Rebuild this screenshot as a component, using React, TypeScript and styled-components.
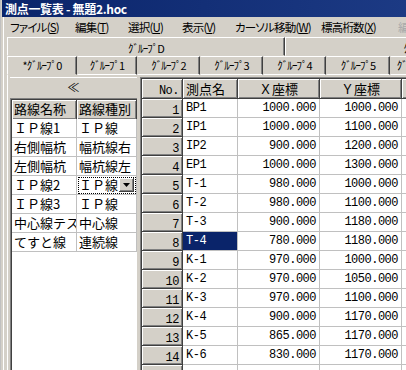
import React from 'react'
import styled, { createGlobalStyle } from 'styled-components'

const UI = `"Noto Sans CJK JP", "Noto Sans", sans-serif`
const MONO = `"Liberation Mono", "Noto Sans CJK JP", monospace`

const GlobalStyle = createGlobalStyle`
  html, body {
    margin: 0;
    padding: 0;
    background: #d4d0c8;
    overflow: hidden;
  }
`

const Window = styled.div`
  width: 406px;
  height: 370px;
  box-sizing: border-box;
  padding-left: 4px;
  background: linear-gradient(to right, #c0c0c0 0 1px, #d4d0c8 1px 3px, #ffffff 3px 4px, #d4d0c8 4px);
  display: flex;
  flex-direction: column;
  overflow: hidden;
  font-family: ${UI};
  color: #000;
`

const TitleBar = styled.div`
  height: 17px;
  margin-left: -2px;
  padding-left: 3px;
  background: linear-gradient(to right, #0a246a, #1c3a84);
  color: #fff;
  font-size: 12px;
  font-weight: 700;
  letter-spacing: -0.3px;
  line-height: 17px;
  white-space: nowrap;
`

const MenuBar = styled.div`
  height: 20px;
  display: flex;
  align-items: center;
  padding-left: 6px;
  font-size: 11.5px;
  font-feature-settings: 'palt';
  letter-spacing: -0.8px;
  white-space: nowrap;
`

const MenuItem = styled.span<{ $w: number; $disabled?: boolean }>`
  width: ${p => p.$w}px;
  flex-shrink: 0;
  color: ${p => (p.$disabled ? '#a8a8a8' : '#000')};
`

const Accel = styled.span`
  text-decoration: underline;
`

const TabControl = styled.div`
  flex: 1;
  margin-left: 3px;
  display: flex;
  flex-direction: column;
  min-height: 0;
`

const TabRow = styled.div`
  display: flex;
  height: 19px;
  flex-shrink: 0;
`

const Tab = styled.div<{ $w: number; $selected?: boolean; $back?: boolean }>`
  width: ${p => p.$w}px;
  flex-shrink: 0;
  box-sizing: border-box;
  border-top: 1px solid #fff;
  border-left: 1px solid ${p => (p.$selected ? '#fff' : '#d4d0c8')};
  border-right: 1px solid #404040;
  border-bottom: 1px solid ${p => (p.$selected ? '#d4d0c8' : '#fff')};
  box-shadow: inset -1px 0 #808080;
  padding-top: ${p => (p.$back ? 3 : 0)}px;
  font-size: 11px;
  letter-spacing: -0.9px;
  line-height: ${p => (p.$back ? 15 : 17)}px;
  text-align: center;
  white-space: nowrap;
  overflow: hidden;
`

const Page = styled.div`
  flex: 1;
  min-height: 0;
  display: flex;
  border-left: 1px solid #fff;
  padding: 2px 0 0 2px;
`

const LeftPane = styled.div`
  width: 127px;
  flex-shrink: 0;
  display: flex;
  flex-direction: column;
`

const CollapseBar = styled.div`
  height: 21px;
  flex-shrink: 0;
  box-sizing: border-box;
  border-top: 1px solid #fff;
  text-align: center;
  font-size: 12px;
  line-height: 17px;
`

const RouteList = styled.div`
  flex: 1;
  background: #fff;
  border-left: 1px solid #808080;
  border-top: 1px solid #808080;
  box-shadow: inset 1px 1px #404040;
  padding: 1px 0 0 1px;
  display: grid;
  grid-template-columns: 65px 60px;
  grid-auto-rows: 19px;
  align-content: start;
  font-size: 13px;
`

const RouteHead = styled.div`
  box-sizing: border-box;
  background: #d4d0c8;
  box-shadow: inset 1px 1px #fff, inset -1px -1px #808080;
  border-right: 1px solid #404040;
  padding-left: 2px;
  line-height: 18px;
  white-space: nowrap;
  overflow: hidden;
`

const RouteCell = styled.div`
  box-sizing: border-box;
  border-right: 1px solid #c0c0c0;
  border-bottom: 1px solid #c0c0c0;
  padding-left: 2px;
  line-height: 18px;
  white-space: nowrap;
  overflow: hidden;
`

const ComboCell = styled(RouteCell)`
  display: flex;
  align-items: center;
  outline: 1px dotted #000;
  outline-offset: -2px;
  padding-right: 2px;
`

const ComboText = styled.span`
  flex: 1;
  overflow: hidden;
`

const ComboButton = styled.div`
  width: 15px;
  height: 14px;
  box-sizing: border-box;
  background: #d4d0c8;
  border-right: 1px solid #404040;
  border-bottom: 1px solid #404040;
  box-shadow: inset 1px 1px #fff, inset -1px -1px #808080;
  display: flex;
  align-items: center;
  justify-content: center;
`

const Splitter = styled.div`
  width: 3px;
  flex-shrink: 0;
`

const Grid = styled.div`
  flex: 1;
  min-width: 0;
  overflow: hidden;
  border-left: 1px solid #808080;
  border-top: 1px solid #808080;
  box-shadow: inset 1px 1px #404040;
  padding: 1px 0 0 1px;
  background: #fff;
  display: grid;
  grid-template-columns: 41px 55px 82px 82px 80px;
  grid-template-rows: 20px;
  grid-auto-rows: 19px;
  align-content: start;
  font-size: 13px;
`

const HeadCell = styled.div<{ $align: 'left' | 'right' | 'center' }>`
  box-sizing: border-box;
  background: #d4d0c8;
  box-shadow: inset 1px 1px #fff, inset -1px -1px #808080;
  border-right: 1px solid #404040;
  border-bottom: 1px solid #404040;
  text-align: ${p => p.$align};
  padding: 0 3px;
  line-height: 19px;
  white-space: nowrap;
  overflow: hidden;
`

const Mono = styled.span`
  font-family: ${MONO};
  font-size: 12px;
  letter-spacing: -0.5px;
`

const Cell = styled.div<{ $align: 'left' | 'right'; $selected?: boolean }>`
  box-sizing: border-box;
  border-right: 1px solid #c0c0c0;
  border-bottom: 1px solid #c0c0c0;
  background: ${p => (p.$selected ? '#0a246a' : '#fff')};
  color: ${p => (p.$selected ? '#fff' : '#000')};
  text-align: ${p => p.$align};
  padding: 0 3px;
  font-family: ${MONO};
  font-size: 12px;
  letter-spacing: -0.5px;
  line-height: 18px;
  white-space: nowrap;
  overflow: hidden;
`

const menus: [string, string, number][] = [
  ['ファイル', 'S', 65],
  ['編集', 'T', 53],
  ['選択', 'U', 54],
  ['表示', 'V', 53],
  ['カーソル移動', 'W', 86],
  ['標高桁数', 'X', 77],
]

const lowerTabs: [string, number][] = [
  ['*ｸﾞﾙｰﾌﾟ0', 70],
  ['ｸﾞﾙｰﾌﾟ1', 60],
  ['ｸﾞﾙｰﾌﾟ2', 63],
  ['ｸﾞﾙｰﾌﾟ3', 63],
  ['ｸﾞﾙｰﾌﾟ4', 63],
  ['ｸﾞﾙｰﾌﾟ5', 64],
  ['ｸﾞﾙｰﾌﾟ6', 48],
]

const routes = [
  ['ＩＰ線1', 'ＩＰ線'],
  ['右側幅杭', '幅杭線右'],
  ['左側幅杭', '幅杭線左'],
  ['ＩＰ線2', 'ＩＰ線'],
  ['ＩＰ線3', 'ＩＰ線'],
  ['中心線テスト', '中心線'],
  ['てすと線', '連続線'],
]

const points = [
  ['BP1', '1000.000', '1000.000'],
  ['IP1', '1000.000', '1100.000'],
  ['IP2', '900.000', '1200.000'],
  ['EP1', '1000.000', '1300.000'],
  ['T-1', '980.000', '1000.000'],
  ['T-2', '980.000', '1100.000'],
  ['T-3', '900.000', '1180.000'],
  ['T-4', '780.000', '1180.000'],
  ['K-1', '970.000', '1000.000'],
  ['K-2', '970.000', '1050.000'],
  ['K-3', '970.000', '1100.000'],
  ['K-4', '900.000', '1170.000'],
  ['K-5', '865.000', '1170.000'],
  ['K-6', '830.000', '1170.000'],
  ['', '', ''],
]

const COMBO_ROW = 3
const SELECTED_ROW = 7

function App() {
  return (
    <Window>
      <GlobalStyle />
      <TitleBar>測点一覧表 - 無題2.hoc</TitleBar>
      <MenuBar>
        {menus.map(([label, key, w]) => (
          <MenuItem key={key} $w={w}>
            {label}(<Accel>{key}</Accel>)
          </MenuItem>
        ))}
        <MenuItem $w={40} $disabled>編集</MenuItem>
      </MenuBar>
      <TabControl>
        <TabRow>
          <Tab $w={278} $selected $back>ｸﾞﾙｰﾌﾟD</Tab>
          <Tab $w={272} $selected $back>ｸﾞﾙｰﾌﾟE</Tab>
        </TabRow>
        <TabRow>
          {lowerTabs.map(([label, w], i) => (
            <Tab key={label} $w={w} $selected={i === 0}>
              {label}
            </Tab>
          ))}
        </TabRow>
        <Page>
          <LeftPane>
            <CollapseBar>≪</CollapseBar>
            <RouteList>
              <RouteHead>路線名称</RouteHead>
              <RouteHead>路線種別</RouteHead>
              {routes.map(([name, kind], i) => (
                <React.Fragment key={name}>
                  <RouteCell>{name}</RouteCell>
                  {i === COMBO_ROW ? (
                    <ComboCell>
                      <ComboText>{kind}</ComboText>
                      <ComboButton>
                        <svg width="7" height="4" viewBox="0 0 7 4">
                          <polygon points="0,0 7,0 3.5,4" fill="#000" />
                        </svg>
                      </ComboButton>
                    </ComboCell>
                  ) : (
                    <RouteCell>{kind}</RouteCell>
                  )}
                </React.Fragment>
              ))}
            </RouteList>
          </LeftPane>
          <Splitter />
          <Grid>
            <HeadCell $align="right">
              <Mono>No.</Mono>
            </HeadCell>
            <HeadCell $align="left">測点名</HeadCell>
            <HeadCell $align="center">Ｘ座標</HeadCell>
            <HeadCell $align="center">Ｙ座標</HeadCell>
            <HeadCell $align="center" />
            {points.map(([name, x, y], i) => (
              <React.Fragment key={i}>
                <HeadCell $align="right">
                  <Mono>{name ? i + 1 : ''}</Mono>
                </HeadCell>
                <Cell $align="left" $selected={i === SELECTED_ROW}>
                  {name}
                </Cell>
                <Cell $align="right">{x}</Cell>
                <Cell $align="right">{y}</Cell>
                <Cell $align="right" />
              </React.Fragment>
            ))}
          </Grid>
        </Page>
      </TabControl>
    </Window>
  )
}

export default App
